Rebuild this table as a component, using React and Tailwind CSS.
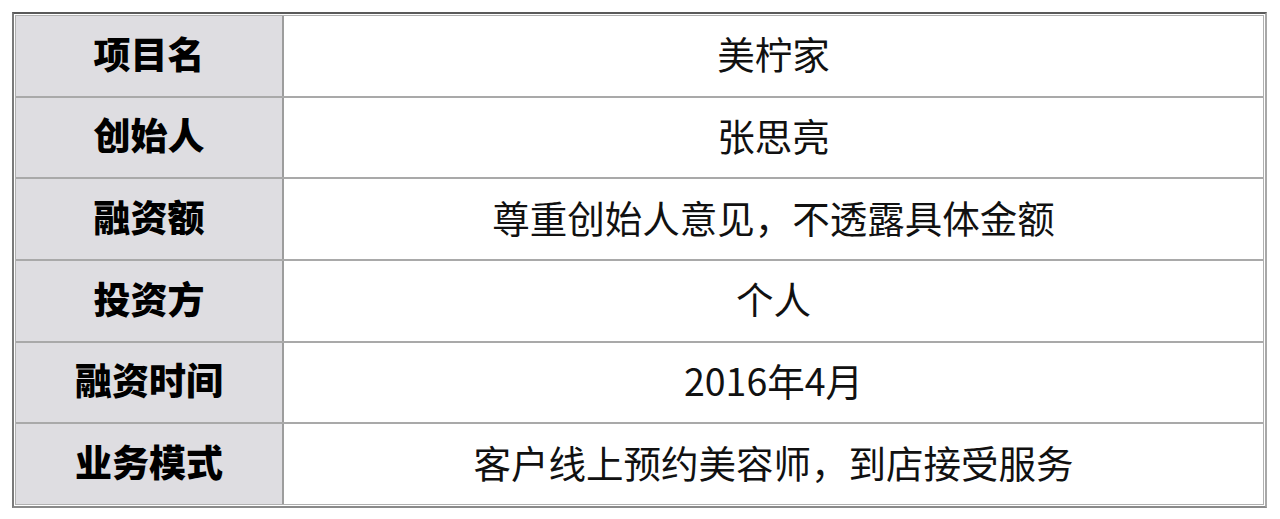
import React from "react";

const rows = [
  ["项目名", "美柠家"],
  ["创始人", "张思亮"],
  ["融资额", "尊重创始人意见，不透露具体金额"],
  ["投资方", "个人"],
  ["融资时间", "2016年4月"],
  ["业务模式", "客户线上预约美容师，到店接受服务"],
];

export default function App() {
  return (
    <div
      className="w-[1280px] h-[519px] bg-white pt-[12px] pl-[12px]"
      style={{ fontFamily: '"Noto Sans CJK SC", "Liberation Sans", sans-serif' }}
    >
      <div className="w-[1255px] h-[496px] border-t-2 border-l-2 border-t-[#5a5a5a] border-l-[#7a7a7a] border-r-2 border-b-2 border-r-[#a8a8a8] border-b-[#8a8a8a] p-[1px]">
        <div className="border border-[#b0b0b0] h-full flex flex-col">
          {rows.map(([k, v], i) => (
            <div
              key={i}
              className={`flex flex-1 ${i > 0 ? "border-t-2 border-[#a9a9a9]" : ""}`}
            >
              <div className="w-[268px] bg-[#dedde1] border-r-2 border-[#9d9d9d] flex items-center justify-center pb-[5px] text-[37px] font-black text-black">
                {k}
              </div>
              <div className="flex-1 bg-white flex items-center justify-center pb-[5px] text-[37.5px] text-[#111]">
                {v}
              </div>
            </div>
          ))}
        </div>
      </div>
    </div>
  );
}
